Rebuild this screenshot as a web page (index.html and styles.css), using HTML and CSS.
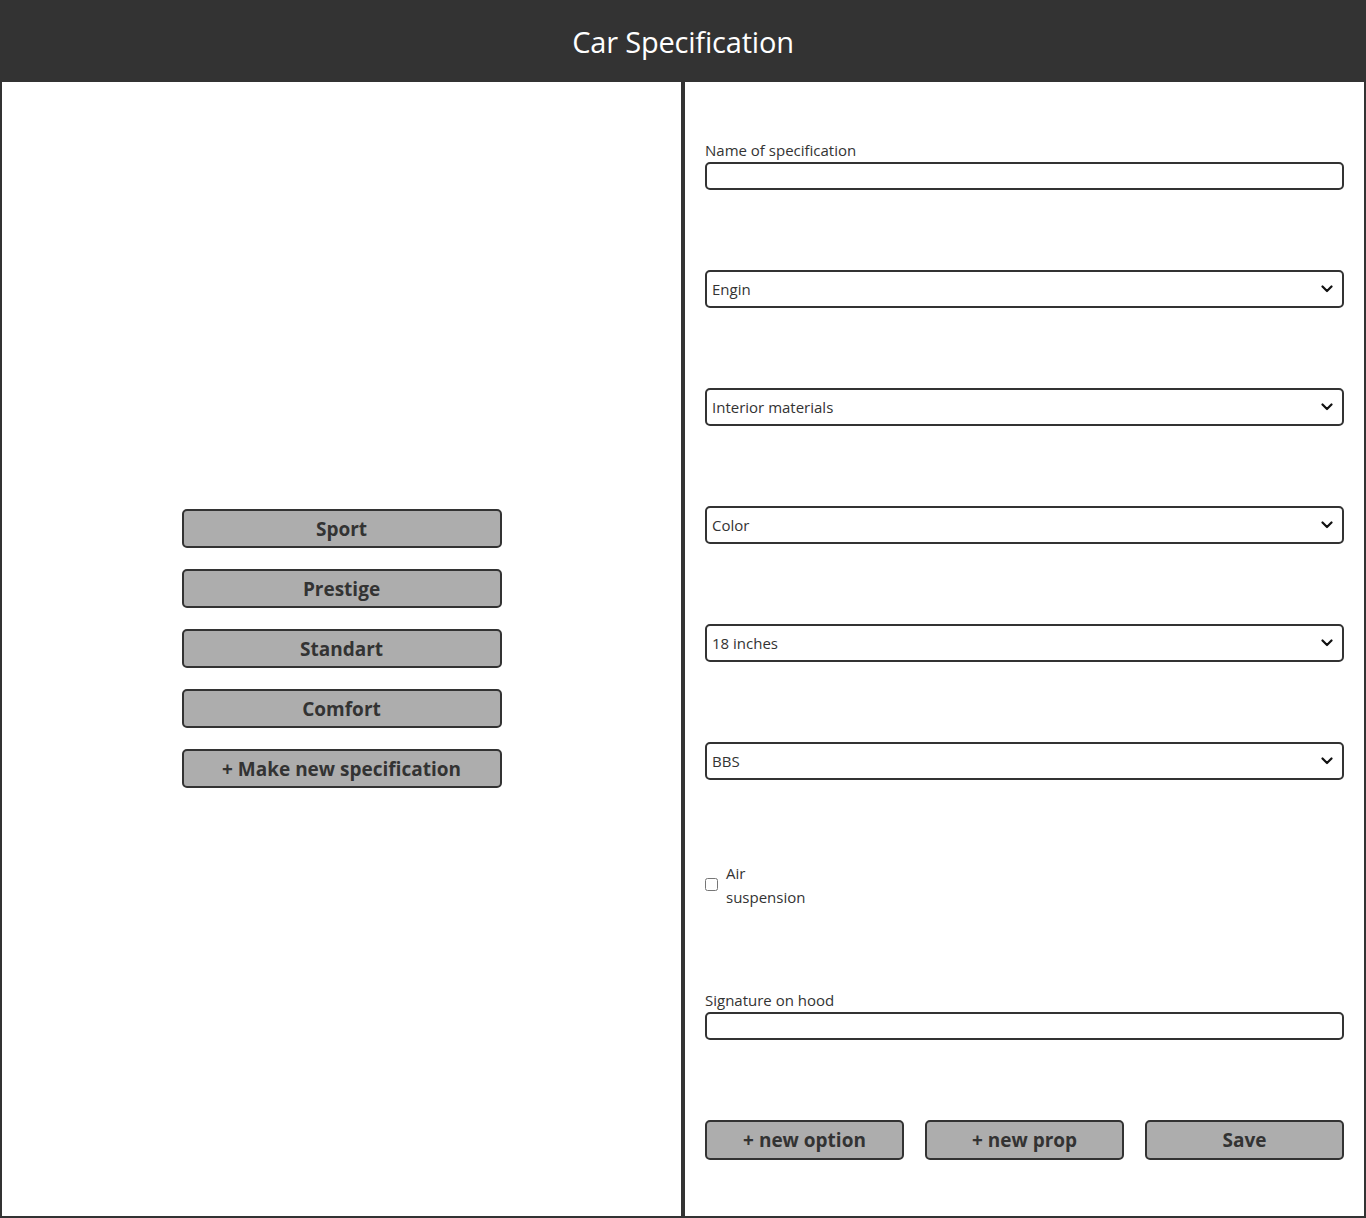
FILE: index.html
```html
<!DOCTYPE html>
<html lang="en">
<head>
<meta charset="utf-8">
<title>Car Specification</title>
<link rel="stylesheet" href="styles.css">
</head>
<body>
<header class="topbar">
  <h1 class="title">Car Specification</h1>
</header>
<main class="layout">
  <section class="panel panel-list">
    <div class="spec-list">
      <button class="btn btn-wide">Sport</button>
      <button class="btn btn-wide">Prestige</button>
      <button class="btn btn-wide">Standart</button>
      <button class="btn btn-wide">Comfort</button>
      <button class="btn btn-wide">+ Make new specification</button>
    </div>
  </section>
  <section class="panel panel-form">
    <div class="field">
      <label class="field-label" for="spec-name">Name of specification</label>
      <input class="text-input" id="spec-name" type="text">
    </div>
    <div class="select-wrap">
      <select class="select"><option>Engin</option></select>
      <svg class="chevron" viewBox="0 0 12 8" width="12" height="8"><path d="M1.5 1.5 L6 6 L10.5 1.5" fill="none" stroke="#111" stroke-width="2.2" stroke-linecap="round" stroke-linejoin="round"/></svg>
    </div>
    <div class="select-wrap">
      <select class="select"><option>Interior materials</option></select>
      <svg class="chevron" viewBox="0 0 12 8" width="12" height="8"><path d="M1.5 1.5 L6 6 L10.5 1.5" fill="none" stroke="#111" stroke-width="2.2" stroke-linecap="round" stroke-linejoin="round"/></svg>
    </div>
    <div class="select-wrap">
      <select class="select"><option>Color</option></select>
      <svg class="chevron" viewBox="0 0 12 8" width="12" height="8"><path d="M1.5 1.5 L6 6 L10.5 1.5" fill="none" stroke="#111" stroke-width="2.2" stroke-linecap="round" stroke-linejoin="round"/></svg>
    </div>
    <div class="select-wrap">
      <select class="select"><option>18 inches</option></select>
      <svg class="chevron" viewBox="0 0 12 8" width="12" height="8"><path d="M1.5 1.5 L6 6 L10.5 1.5" fill="none" stroke="#111" stroke-width="2.2" stroke-linecap="round" stroke-linejoin="round"/></svg>
    </div>
    <div class="select-wrap">
      <select class="select"><option>BBS</option></select>
      <svg class="chevron" viewBox="0 0 12 8" width="12" height="8"><path d="M1.5 1.5 L6 6 L10.5 1.5" fill="none" stroke="#111" stroke-width="2.2" stroke-linecap="round" stroke-linejoin="round"/></svg>
    </div>
    <div class="check-row">
      <input class="checkbox" id="air" type="checkbox">
      <label class="check-label" for="air">Air suspension</label>
    </div>
    <div class="field">
      <label class="field-label" for="sig">Signature on hood</label>
      <input class="text-input" id="sig" type="text">
    </div>
    <div class="actions">
      <button class="btn">+ new option</button>
      <button class="btn">+ new prop</button>
      <button class="btn">Save</button>
    </div>
  </section>
</main>
</body>
</html>
```
FILE: styles.css
```css
* { box-sizing: border-box; }
html, body {
  margin: 0;
  padding: 0;
}
body {
  font-family: "Open Sans", "Noto Sans", "Liberation Sans", sans-serif;
  color: #333;
  background: #fff;
  width: 1366px;
  height: 1218px;
  display: flex;
  flex-direction: column;
}
.topbar {
  height: 82px;
  background: #333;
  display: flex;
  align-items: center;
  justify-content: center;
}
.title {
  margin: 0;
  color: #fff;
  font-weight: 400;
  font-size: 29px;
  letter-spacing: -0.2px;
}
.layout {
  flex: 1;
  display: grid;
  grid-template-columns: 683px 683px;
}
.panel {
  border: 2px solid #333;
  border-top: none;
}
.panel-list {
  display: flex;
  align-items: center;
  justify-content: center;
}
.spec-list {
  display: flex;
  flex-direction: column;
  gap: 21px;
  margin-top: -1px;
}
.btn {
  font-family: inherit;
  font-weight: 700;
  font-size: 19px;
  color: #333;
  background: #adadad;
  border: 2px solid #333;
  border-radius: 5px;
  height: 39px;
  padding: 1px 0 0 0;
  line-height: 1;
}
.btn-wide { width: 320px; }
.panel-form {
  display: flex;
  flex-direction: column;
  gap: 80px;
  padding: 57px 20px 0 20px;
}
.field {
  display: flex;
  flex-direction: column;
}
.field-label {
  font-size: 15px;
  line-height: 22px;
  height: 23px;
}
.text-input {
  height: 28px;
  border: 2px solid #333;
  border-radius: 5px;
  font-family: inherit;
  font-size: 15px;
  padding: 0 6px;
  background: #fff;
}
.select-wrap {
  position: relative;
  height: 38px;
}
.select {
  appearance: none;
  -webkit-appearance: none;
  height: 38px;
  width: 100%;
  border: 2px solid #333;
  border-radius: 5px;
  background-color: #fff;
  font-family: inherit;
  font-size: 15px;
  color: #333;
  padding: 0 30px 0 5px;
  margin: 0;
}
.chevron {
  position: absolute;
  right: 11px;
  top: 15px;
  pointer-events: none;
}
.check-row {
  display: flex;
  align-items: center;
  height: 49px;
}
.checkbox {
  width: 13px;
  height: 13px;
  margin: 0 8px 0 0;
}
.check-label {
  width: 90px;
  font-size: 15px;
  line-height: 24px;
}
.actions {
  display: grid;
  grid-template-columns: repeat(3, 1fr);
  gap: 21px;
}
.actions .btn {
  height: 40px;
}
```
